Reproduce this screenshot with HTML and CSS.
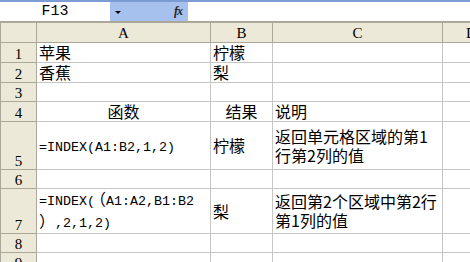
FILE: index.html
```html
<!DOCTYPE html>
<html lang="zh-CN">
<head>
    <meta charset="UTF-8">
    <title>INDEX</title>
    <link rel="stylesheet" href="styles.css">
</head>
<body>
    <div class="bar">
        <div class="namebox">F13</div>
        <div class="tools">
            <span class="arrow"></span>
            <span class="fx">fx</span>
        </div>
        <div class="formula"></div>
    </div>
    <table class="sheet">
        <colgroup>
            <col class="col-rh">
            <col class="col-a">
            <col class="col-b">
            <col class="col-c">
            <col class="col-d">
        </colgroup>
        <tr class="head">
            <th></th><th>A</th><th>B</th><th>C</th><th>D</th>
        </tr>
        <tr>
            <th class="rh">1</th><td>苹果</td><td>柠檬</td><td></td><td></td>
        </tr>
        <tr>
            <th class="rh">2</th><td>香蕉</td><td>梨</td><td></td><td></td>
        </tr>
        <tr>
            <th class="rh">3</th><td></td><td></td><td></td><td></td>
        </tr>
        <tr>
            <th class="rh">4</th><td class="center">函数</td><td class="center">结果</td><td>说明</td><td></td>
        </tr>
        <tr class="tall">
            <th class="rh">5</th>
            <td><span class="mono">=INDEX(A1:B2,1,2)</span></td>
            <td>柠檬</td>
            <td>返回单元格区域的第1<br>行第2列的值</td>
            <td></td>
        </tr>
        <tr>
            <th class="rh">6</th><td></td><td></td><td></td><td></td>
        </tr>
        <tr class="mid">
            <th class="rh">7</th>
            <td><span class="mono">=INDEX(</span><span class="gap">（</span><span class="mono">A1:A2,B1:B2</span><br>）<span class="mono">,2,1,2)</span></td>
            <td>梨</td>
            <td>返回第2个区域中第2行<br>第1列的值</td>
            <td></td>
        </tr>
        <tr>
            <th class="rh">8</th><td></td><td></td><td></td><td></td>
        </tr>
        <tr>
            <th class="rh">9</th><td></td><td></td><td></td><td></td>
        </tr>
    </table>
</body>
</html>
```

FILE: styles.css
```css
*{
    margin: 0;
    padding: 0;
    box-sizing: border-box;
}
body{
    width: 470px;
    height: 262px;
    overflow: hidden;
    background: #ffffff;
    font-family: "Noto Sans CJK SC", "Liberation Sans", sans-serif;
}
.bar{
    display: flex;
    height: 22px;
    border-top: 2px solid #7d9bd4;
    border-bottom: 1px solid #aca899;
}
.namebox{
    width: 110px;
    font-family: "Liberation Mono", monospace;
    font-size: 15px;
    line-height: 19px;
    text-align: center;
    color: #000000;
}
.tools{
    width: 78px;
    background: #a6c1ee;
    display: flex;
    align-items: center;
    justify-content: space-between;
    padding: 0 6px 0 5px;
}
.arrow{
    width: 0;
    height: 0;
    border-left: 3px solid transparent;
    border-right: 3px solid transparent;
    border-top: 3px solid #000000;
    margin-top: 1px;
}
.fx{
    font-family: "Liberation Serif", serif;
    font-style: italic;
    font-weight: bold;
    font-size: 12px;
    letter-spacing: -1px;
    color: #222222;
}
.formula{
    flex: 1;
}
.sheet{
    table-layout: fixed;
    width: 500px;
    border-collapse: collapse;
    font-size: 16px;
    color: #000000;
}
.col-rh{ width: 36px; }
.col-a{ width: 174px; }
.col-b{ width: 62px; }
.col-c{ width: 170px; }
.col-d{ width: 58px; }
.sheet td{
    border: 1px solid #c6c6c6;
    height: 19px;
    padding: 0 2px;
    line-height: 19px;
    vertical-align: middle;
    white-space: nowrap;
}
.sheet th{
    background: #ece9d8;
    border: 1px solid #aca899;
    font-family: "Liberation Serif", serif;
    font-weight: normal;
    font-size: 15px;
    line-height: 16px;
    color: #000000;
}
.head th{
    height: 20px;
}
.rh{
    vertical-align: bottom;
    text-align: center;
}
.tall td, .tall th{
    height: 48px;
}
.mid td, .mid th{
    height: 38px;
}
.center{
    text-align: center;
}
.mono{
    font-family: "Liberation Mono", monospace;
    font-size: 13.33px;
}
.gap{
    margin-left: 3px;
}
```
